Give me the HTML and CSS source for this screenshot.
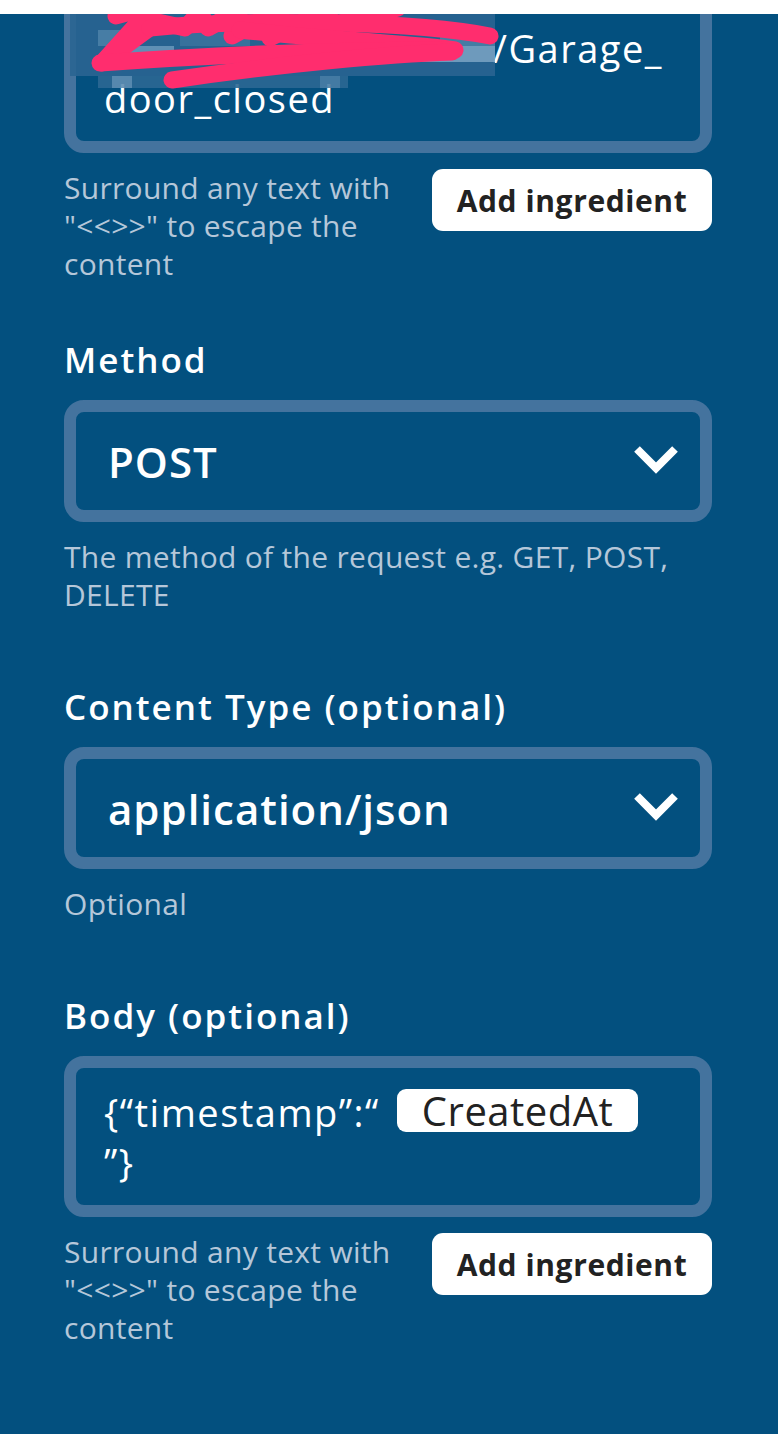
FILE: index.html
```html
<!DOCTYPE html>
<html>
<head>
<meta charset="utf-8">
<link rel="stylesheet" href="styles.css">
</head>
<body>
<div class="topbar"></div>
<main class="page">
  <div class="field first">
    <div class="box textbox">
      <div class="line"><span class="redacted wide"></span></div>
      <div class="line"><span class="redacted mid"></span>/Garage_</div>
      <div class="line">door_closed</div>
    </div>
    <div class="ingredient-row">
      <p class="hint">Surround any text with "&lt;&lt;&gt;&gt;" to escape the content</p>
      <button class="add-btn">Add ingredient</button>
    </div>
  </div>

  <div class="field">
    <h2 class="label">Method</h2>
    <div class="box select">
      <span class="value">POST</span>
      <svg class="chevron" viewBox="0 0 48 30" width="48" height="30"><polyline points="5,5 24,24 43,5" fill="none" stroke="#fff" stroke-width="8"/></svg>
    </div>
    <p class="hint">The method of the request e.g. GET, POST, DELETE</p>
  </div>

  <div class="field">
    <h2 class="label">Content Type (optional)</h2>
    <div class="box select">
      <span class="value">application/json</span>
      <svg class="chevron" viewBox="0 0 48 30" width="48" height="30"><polyline points="5,5 24,24 43,5" fill="none" stroke="#fff" stroke-width="8"/></svg>
    </div>
    <p class="hint">Optional</p>
  </div>

  <div class="field">
    <h2 class="label">Body (optional)</h2>
    <div class="box textbox body">
      <div class="line">{“timestamp”:“<span class="pill">CreatedAt</span></div>
      <div class="line">”}</div>
    </div>
    <div class="ingredient-row">
      <p class="hint">Surround any text with "&lt;&lt;&gt;&gt;" to escape the content</p>
      <button class="add-btn">Add ingredient</button>
    </div>
  </div>

  <svg class="scribble" viewBox="0 0 778 100" width="778" height="100">
    <g opacity="0.9">
      <rect x="70" y="14" width="425" height="62" fill="#2a6592"/>
      <rect x="98" y="30" width="40" height="16" fill="#4f82aa"/>
      <rect x="114" y="46" width="60" height="16" fill="#6a98bb"/>
      <rect x="180" y="30" width="70" height="16" fill="#3d75a0"/>
      <rect x="250" y="46" width="90" height="16" fill="#5d8db3"/>
      <rect x="340" y="30" width="60" height="16" fill="#1f5e8c"/>
      <rect x="400" y="46" width="95" height="16" fill="#7aa3c3"/>
      <rect x="440" y="30" width="55" height="16" fill="#4d81a9"/>
      <rect x="98" y="76" width="250" height="12" fill="#2c6893"/>
      <rect x="112" y="76" width="20" height="12" fill="#5f8fb4"/>
      <rect x="320" y="76" width="20" height="12" fill="#4b7fa7"/>
    </g>
    <g fill="none" stroke="#ff2d6e" stroke-linecap="round" stroke-linejoin="round" stroke-width="17">
      <path d="M116,16 C128,12 140,10 148,12 L102,63 L158,22 L185,28 L200,12 L208,28 L240,10 L232,36 L276,12 L270,38 L322,12 L336,24 L398,8"/>
      <path d="M150,28 C260,18 420,22 490,36"/>
      <path d="M240,30 C330,40 420,44 455,50"/>
      <path d="M100,63 C200,56 330,50 452,50"/>
      <path d="M172,80 C280,64 390,54 452,52"/>
    </g>
  </svg>
</main>
</body>
</html>
```

FILE: styles.css
```css
* { box-sizing: border-box; }
html, body { margin: 0; padding: 0; }
body {
  background: #03507f;
  font-family: "Open Sans", "Noto Sans", sans-serif;
  color: #fff;
  width: 778px;
  height: 1434px;
  overflow: hidden;
}
.topbar {
  height: 14px;
  background: #fff;
  position: relative;
  z-index: 2;
}
.page {
  position: relative;
  display: flow-root;
  padding: 0 66px 0 64px;
}
.field { margin-bottom: 71px; }
.field.first { margin-top: -72px; margin-bottom: 55px; }

.label {
  margin: 0 0 18px;
  font-size: 35px;
  line-height: 44px;
  font-weight: 600;
  letter-spacing: 2px;
}
.box {
  border: 12px solid #44739e;
  border-radius: 20px;
  background: #03507f;
}
.textbox {
  padding: 19px 20px 18px 28px;
  font-size: 38px;
  line-height: 50px;
  font-weight: 500;
  letter-spacing: 1.5px;
}
.body .line { white-space: nowrap; }
.redacted { display: inline-block; }
.redacted.wide { width: 300px; height: 1px; }
.redacted.mid { width: 389px; }

.select {
  height: 122px;
  display: flex;
  align-items: center;
  justify-content: space-between;
  padding: 0 20px 0 32px;
}
.select .value {
  font-size: 42px;
  font-weight: 600;
  letter-spacing: 1px;
}
.chevron { display: block; margin-top: -4px; }

.hint {
  margin: 16px 0 0;
  font-size: 30px;
  line-height: 38px;
  color: #b5c7d9;
  font-weight: 400;
  letter-spacing: 0.3px;
}
.ingredient-row {
  display: flex;
  justify-content: space-between;
  align-items: flex-start;
  gap: 20px;
}
.ingredient-row .hint { width: 345px; }
.add-btn {
  margin-top: 16px;
  width: 280px;
  height: 62px;
  border: none;
  border-radius: 11px;
  background: #fff;
  color: #222;
  font-family: "Open Sans", "Noto Sans", sans-serif;
  font-size: 30px;
  font-weight: 700;
  letter-spacing: 0.6px;
  flex-shrink: 0;
}
.pill {
  display: inline-block;
  background: #fff;
  color: #222;
  border-radius: 9px;
  height: 43px;
  line-height: 43px;
  padding: 0 25px;
  font-size: 40px;
  font-weight: 400;
  letter-spacing: 0.5px;
  vertical-align: 1px;
  margin-left: 17px;
}
.scribble {
  position: absolute;
  top: -14px;
  left: 0;
}
```
